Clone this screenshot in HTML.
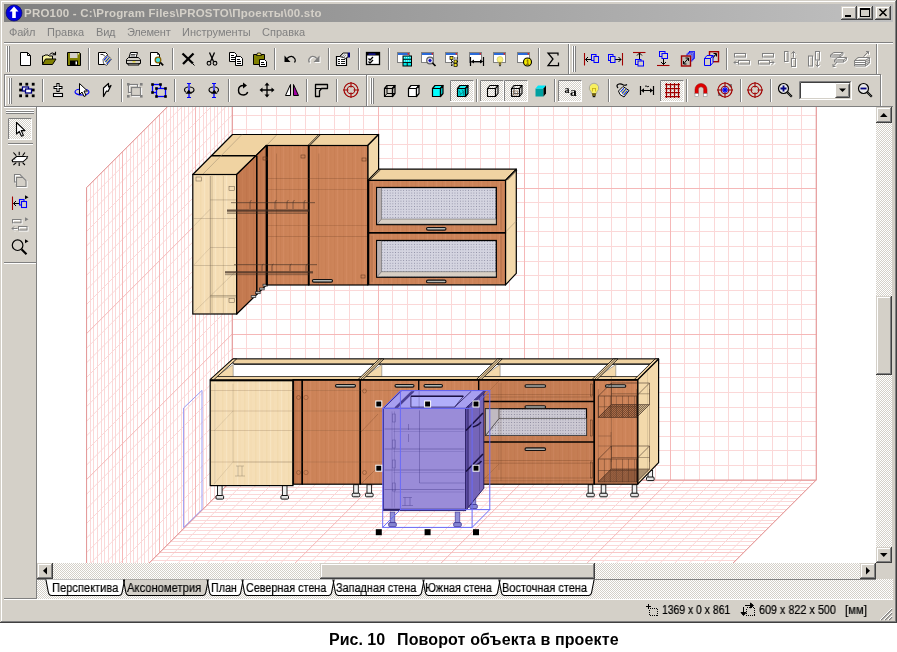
<!DOCTYPE html>
<html><head><meta charset="utf-8"><title>PRO100</title>
<style>
html,body{margin:0;padding:0;background:#fff;}
body{width:897px;height:652px;position:relative;overflow:hidden;font-family:"Liberation Sans",sans-serif;font-size:11px;color:#000;}
.a{position:absolute;}
#win{position:absolute;left:0;top:0;width:897px;height:623px;background:#d4d0c8;}
.t{position:absolute;white-space:nowrap;line-height:13px;font-size:11px;will-change:transform;}
.dith{background-image:conic-gradient(#fff 25%,#d4d0c8 0 50%,#fff 0 75%,#d4d0c8 0);background-size:2px 2px;}
.btn{position:absolute;background:#d4d0c8;box-shadow:inset -1px -1px 0 #404040,inset 1px 1px 0 #d4d0c8,inset -2px -2px 0 #808080,inset 2px 2px 0 #fff;}
.sunk{position:absolute;box-shadow:inset 1px 1px 0 #808080,inset -1px -1px 0 #fff;}
.vs{position:absolute;width:1px;background:#808080;box-shadow:1px 0 0 #fff;}
.hs{position:absolute;height:1px;background:#808080;box-shadow:0 1px 0 #fff;}
.tb{font-size:12px;z-index:5;-webkit-text-stroke:0.2px #000;transform-origin:0 0}
.grip{position:absolute;width:1px;background:#fff;box-shadow:1px 0 0 #d4d0c8,2px 0 0 #808080;}
</style></head><body>
<div id="win">
<!-- window frame -->
<div class="a" style="left:0;top:0;width:897px;height:623px;box-shadow:inset -1px -1px 0 #404040,inset 1px 1px 0 #d4d0c8,inset -2px -2px 0 #808080,inset 2px 2px 0 #fff;"></div>
<!-- title bar -->
<div class="a" style="left:4px;top:4px;width:889px;height:18px;background:linear-gradient(90deg,#808080,#c0c0c0);"></div>
<div class="t" id="title" style="left:24px;top:6.6px;color:#d4d0c8;font-weight:bold;font-size:11.5px;letter-spacing:0.22px;">PRO100 - C:\Program Files\PROSTO\Проекты\00.sto</div>
<!-- caption buttons -->
<div class="btn" style="left:841px;top:6px;width:16px;height:14px;"></div>
<div class="btn" style="left:857px;top:6px;width:16px;height:14px;"></div>
<div class="btn" style="left:875px;top:6px;width:16px;height:14px;"></div>
<!-- menu -->
<div class="t m" style="left:9px;top:26px;color:#808080;letter-spacing:-0.2px">Файл</div>
<div class="t m" style="left:47px;top:26px;color:#808080;">Правка</div>
<div class="t m" style="left:96px;top:26px;color:#808080;letter-spacing:-0.2px">Вид</div>
<div class="t m" style="left:127px;top:26px;color:#808080;letter-spacing:-0.2px">Элемент</div>
<div class="t m" style="left:182px;top:26px;color:#808080;">Инструменты</div>
<div class="t m" style="left:262px;top:26px;color:#808080;">Справка</div>
<!-- left toolbar -->
<div class="a" style="left:36px;top:107px;width:1px;height:493px;background:#808080;"></div>
<!-- scrollbars -->
<div class="a dith" style="left:876px;top:107px;width:16px;height:456px;"></div>
<div class="btn" style="left:876px;top:107px;width:16px;height:16px;"></div>
<div class="btn" style="left:876px;top:547px;width:16px;height:16px;"></div>
<div class="btn" style="left:876px;top:296px;width:16px;height:79px;"></div>
<div class="a dith" style="left:37px;top:563px;width:839px;height:16px;"></div>
<div class="btn" style="left:37px;top:563px;width:16px;height:16px;"></div>
<div class="btn" style="left:860px;top:563px;width:16px;height:16px;"></div>
<div class="btn" style="left:320px;top:563px;width:275px;height:16px;"></div>
<div class="a" style="left:876px;top:563px;width:16px;height:16px;background:#d4d0c8;"></div>
<!-- tab strip -->
<div class="a dith" style="left:37px;top:579px;width:856px;height:21px;"></div>
<div class="a" style="left:37px;top:579px;width:839px;height:1px;background:#808080;"></div>
<div class="a" style="left:4px;top:598px;width:33px;height:1px;background:#808080;"></div>
<div class="a" style="left:4px;top:599px;width:889px;height:1px;background:#fff;"></div>
<!-- tab labels -->
<div class="t tb" style="left:51.7px;top:582px;transform:scaleX(0.925)">Перспектива</div>
<div class="t tb" style="left:127px;top:582px;transform:scaleX(0.934)">Аксонометрия</div>
<div class="t tb" style="left:210.6px;top:582px;transform:scaleX(0.893)">План</div>
<div class="t tb" style="left:245.7px;top:582px;transform:scaleX(0.898)">Северная стена</div>
<div class="t tb" style="left:336px;top:582px;transform:scaleX(0.906)">Западная стена</div>
<div class="t tb" style="left:425.4px;top:582px;transform:scaleX(0.895)">Южная стена</div>
<div class="t tb" style="left:501.6px;top:582px;transform:scaleX(0.912)">Восточная стена</div>
<!-- status bar -->
<div class="t tb" style="left:661.5px;top:603.5px;transform:scaleX(0.866)">1369 x 0 x 861</div>
<div class="t tb" style="left:759px;top:603.5px;transform:scaleX(0.9)">609 x 822 x 500</div>
<div class="t tb" style="left:845px;top:603.5px;transform:scaleX(0.95)">[мм]</div>
<svg id="scene" width="839" height="456" viewBox="37 107 839 456" style="position:absolute;left:37px;top:107px;background:#fff">
<path d="M246.5 480V42M261.5 480V42M276.5 480V42M290.5 480V42M305.5 480V42M319.5 480V42M334.5 480V42M349.5 480V42M363.5 480V42M392.5 480V42M407.5 480V42M422.5 480V42M436.5 480V42M451.5 480V42M465.5 480V42M480.5 480V42M495.5 480V42M509.5 480V42M538.5 480V42M553.5 480V42M568.5 480V42M582.5 480V42M597.5 480V42M611.5 480V42M626.5 480V42M641.5 480V42M655.5 480V42M684.5 480V42M699.5 480V42M714.5 480V42M728.5 480V42M743.5 480V42M757.5 480V42M772.5 480V42M787.5 480V42M801.5 480V42M232.2 465.5H816.2M232.2 450.5H816.2M232.2 436.5H816.2M232.2 421.5H816.2M232.2 407.5H816.2M232.2 392.5H816.2M232.2 377.5H816.2M232.2 363.5H816.2M232.2 348.5H816.2M232.2 319.5H816.2M232.2 304.5H816.2M232.2 290.5H816.2M232.2 275.5H816.2M232.2 261.5H816.2M232.2 246.5H816.2M232.2 231.5H816.2M232.2 217.5H816.2M232.2 202.5H816.2M232.2 173.5H816.2M232.2 158.5H816.2M232.2 144.5H816.2M232.2 129.5H816.2M232.2 115.5H816.2M232.2 100.5H816.2M232.2 85.5H816.2M232.2 71.5H816.2M232.2 56.5H816.2M228.5 483.6V45.6M224.5 487.3V49.3M221.5 490.9V52.9M217.5 494.6V56.6M214.5 498.2V60.2M210.5 501.8V63.8M206.5 505.5V67.5M203.5 509.1V71.1M199.5 512.8V74.8M192.5 520V82M188.5 523.7V85.7M184.5 527.3V89.3M181.5 531V93M177.5 534.6V96.6M173.5 538.2V100.2M170.5 541.9V103.9M166.5 545.5V107.5M163.5 549.2V111.2M155.5 556.4V118.4M152.5 560.1V122.1M148.5 563.7V125.7M144.5 567.4V129.4M141.5 571V133M137.5 574.6V136.6M133.5 578.3V140.3M130.5 581.9V143.9M126.5 585.6V147.6M119.5 592.8V154.8M115.5 596.5V158.5M112.5 600.1V162.1M108.5 603.8V165.8M104.5 607.4V169.4M101.5 611V173M97.5 614.7V176.7M93.5 618.3V180.3M90.5 622V184M232.2 465.4L86.6 611M232.2 450.8L86.6 596.4M232.2 436.2L86.6 581.8M232.2 421.6L86.6 567.2M232.2 407L86.6 552.6M232.2 392.4L86.6 538M232.2 377.8L86.6 523.4M232.2 363.2L86.6 508.8M232.2 348.6L86.6 494.2M232.2 319.4L86.6 465M232.2 304.8L86.6 450.4M232.2 290.2L86.6 435.8M232.2 275.6L86.6 421.2M232.2 261L86.6 406.6M232.2 246.4L86.6 392M232.2 231.8L86.6 377.4M232.2 217.2L86.6 362.8M232.2 202.6L86.6 348.2M232.2 173.4L86.6 319M232.2 158.8L86.6 304.4M232.2 144.2L86.6 289.8M232.2 129.6L86.6 275.2M232.2 115L86.6 260.6M232.2 100.4L86.6 246M232.2 85.8L86.6 231.4M232.2 71.2L86.6 216.8M232.2 56.6L86.6 202.2M228.6 483.5H812.6M224.9 487.5H808.9M221.3 490.5H805.3M217.6 494.5H801.6M214 498.5H798M210.4 501.5H794.4M206.7 505.5H790.7M203.1 509.5H787.1M199.4 512.5H783.4M192.2 520.5H776.2M188.5 523.5H772.5M184.9 527.5H768.9M181.2 530.5H765.2M177.6 534.5H761.6M174 538.5H758M170.3 541.5H754.3M166.7 545.5H750.7M163 549.5H747M155.8 556.5H739.8M152.1 560.5H736.1M148.5 563.5H732.5M144.8 567.5H728.8M141.2 571.5H725.2M137.6 574.5H721.6M133.9 578.5H717.9M130.3 581.5H714.3M126.6 585.5H710.6M119.4 592.5H703.4M115.7 596.5H699.7M112.1 600.5H696.1M108.4 603.5H692.4M104.8 607.5H688.8M101.2 611.5H685.2M97.5 614.5H681.5M93.9 618.5H677.9M90.2 621.5H674.2M246.8 480L101.2 625.6M261.4 480L115.8 625.6M276 480L130.4 625.6M290.6 480L145 625.6M305.2 480L159.6 625.6M319.8 480L174.2 625.6M334.4 480L188.8 625.6M349 480L203.4 625.6M363.6 480L218 625.6M392.8 480L247.2 625.6M407.4 480L261.8 625.6M422 480L276.4 625.6M436.6 480L291 625.6M451.2 480L305.6 625.6M465.8 480L320.2 625.6M480.4 480L334.8 625.6M495 480L349.4 625.6M509.6 480L364 625.6M538.8 480L393.2 625.6M553.4 480L407.8 625.6M568 480L422.4 625.6M582.6 480L437 625.6M597.2 480L451.6 625.6M611.8 480L466.2 625.6M626.4 480L480.8 625.6M641 480L495.4 625.6M655.6 480L510 625.6M684.8 480L539.2 625.6M699.4 480L553.8 625.6M714 480L568.4 625.6M728.6 480L583 625.6M743.2 480L597.6 625.6M757.8 480L612.2 625.6M772.4 480L626.8 625.6M787 480L641.4 625.6M801.6 480L656 625.6" fill="none" stroke="#fbd8d8" stroke-width="1"/>
<path d="M195.8 516.5H779.8M159.4 552.5H743.4M123 589.5H707M86.6 625.5H670.6" fill="none" stroke="#f8c8c8" stroke-width="1"/>
<path d="M232.5 480V42M378.5 480V42M524.5 480V42M670.5 480V42M816.5 480V42M232.2 480.5H816.2M232.2 334.5H816.2M232.2 188.5H816.2M232.2 42.5H816.2M195.5 516.4V78.4M159.5 552.8V114.8M122.5 589.2V151.2M86.5 625.6V187.6M232.2 480L86.6 625.6M232.2 334L86.6 479.6M232.2 188L86.6 333.6M232.2 42L86.6 187.6M232.2 480L86.6 625.6M378.2 480L232.6 625.6M524.2 480L378.6 625.6M670.2 480L524.6 625.6M816.2 480L670.6 625.6" fill="none" stroke="#f5b8b8" stroke-width="1"/>
<path d="M86.6 187.6L232.2 42L816.2 42L816.2 480L670.6 625.6L86.6 625.6Z" fill="none" stroke="#e39a9a" stroke-width="1"/>
<path d="M232.2 480L232.2 42M232.2 480L816.2 480M232.2 480L86.6 625.6" fill="none" stroke="#e39a9a" stroke-width="1"/>
<defs>
<linearGradient id="gB" x1="0" x2="1" y1="0" y2="0"><stop offset="0" stop-color="#c9774a"/><stop offset="0.5" stop-color="#d08352"/><stop offset="1" stop-color="#c87a4b"/></linearGradient>
<pattern id="grain" width="9" height="40" patternUnits="userSpaceOnUse"><rect width="9" height="40" fill="#cd8459"/><rect x="1" width="1.2" height="40" fill="#c2784e" opacity=".4"/><rect x="4" width="1" height="40" fill="#d79168" opacity=".45"/><rect x="6.5" width="0.8" height="40" fill="#c0764c" opacity=".3"/></pattern>
<pattern id="grainD" width="7" height="40" patternUnits="userSpaceOnUse"><rect width="7" height="40" fill="#c47a50"/><rect x="1" width="1.2" height="40" fill="#b96e45" opacity=".4"/><rect x="4" width="1" height="40" fill="#cc845a" opacity=".4"/></pattern>
<pattern id="birch" width="11" height="40" patternUnits="userSpaceOnUse"><rect width="11" height="40" fill="#f5deb6"/><rect x="2" width="1.5" height="40" fill="#f0d5a6" opacity=".5"/><rect x="6" width="1" height="40" fill="#f9e8c8" opacity=".6"/><rect x="8.5" width="1" height="40" fill="#eed3a3" opacity=".35"/></pattern>
<pattern id="dots" width="2.7" height="2.7" patternUnits="userSpaceOnUse"><rect width="2.7" height="2.7" fill="#d4d4e0"/><rect x="0.9" y="0.9" width="0.9" height="0.9" fill="#8c8ca2"/></pattern>
</defs>
<polygon points="192.8,174.5 232.5,134.5 378.6,134.5 367.8,145.5 266.4,145.5 236.7,174.5" fill="#f0d3a2" stroke="#000" stroke-width="1.2" stroke-linejoin="round" />
<line x1="211.3" y1="155.8" x2="256.3" y2="155.8" stroke="#000" stroke-width="1.6" />
<line x1="308" y1="145.5" x2="318.8" y2="134.5" stroke="#000" stroke-width="0.8" />
<line x1="309.8" y1="145.5" x2="320.6" y2="134.5" stroke="#000" stroke-width="0.8" />
<line x1="266.4" y1="145.5" x2="276.5" y2="135.1" stroke="#8a7a60" stroke-width="0.5" />
<line x1="202.5" y1="174.5" x2="242" y2="134.5" stroke="#9a8a70" stroke-width="0.5" />
<polygon points="367.8,145.5 378.6,134.5 378.6,172 367.8,182" fill="#f3d9ab" stroke="#000" stroke-width="1.2" stroke-linejoin="round" />
<rect x="192.8" y="174.5" width="43.9" height="139.5" fill="url(#birch)" stroke="#000" stroke-width="1.2" />
<line x1="210.3" y1="176" x2="210.3" y2="313" stroke="#6a5a48" stroke-width="0.7" opacity=".7"/>
<line x1="212.1" y1="176" x2="212.1" y2="313" stroke="#6a5a48" stroke-width="0.5" opacity=".45"/>
<line x1="223.6" y1="176" x2="223.6" y2="313" stroke="#6a5a48" stroke-width="0.5" opacity=".35"/>
<line x1="210.3" y1="199.9" x2="236" y2="199.9" stroke="#6a5a48" stroke-width="0.5" opacity=".6"/>
<line x1="210.3" y1="247.7" x2="236" y2="247.7" stroke="#6a5a48" stroke-width="0.5" opacity=".6"/>
<line x1="210.3" y1="295.3" x2="236" y2="295.3" stroke="#6a5a48" stroke-width="0.5" opacity=".6"/>
<line x1="193.5" y1="218.7" x2="236" y2="218.7" stroke="#6a5a48" stroke-width="0.5" opacity=".6"/>
<line x1="193.5" y1="265.4" x2="236" y2="265.4" stroke="#6a5a48" stroke-width="0.5" opacity=".6"/>
<rect x="210.3" y="295.3" width="25.7" height="2.4" fill="#6a5a48" opacity=".25"/>
<line x1="193.5" y1="226.3" x2="210.3" y2="209.1" stroke="#6a5a48" stroke-width="0.4" opacity=".5"/>
<line x1="193.5" y1="312.5" x2="236" y2="271" stroke="#6a5a48" stroke-width="0.4" opacity=".5"/>
<line x1="193.5" y1="265.4" x2="210.3" y2="247.7" stroke="#6a5a48" stroke-width="0.4" opacity=".4"/>
<rect x="196" y="177" width="5.5" height="4" fill="none" stroke="#6a5a48" stroke-width="0.5" />
<rect x="229" y="186.5" width="5.5" height="4" fill="none" stroke="#6a5a48" stroke-width="0.5" />
<rect x="229" y="298.7" width="5.5" height="4" fill="none" stroke="#6a5a48" stroke-width="0.5" />
<polygon points="236.7,174.5 266.4,145.5 266.4,285 236.7,314" fill="url(#grainD)" stroke="#000" stroke-width="1.2" stroke-linejoin="round" />
<line x1="256.8" y1="155.8" x2="256.8" y2="294.5" stroke="#000" stroke-width="1.5" />
<rect x="251.2" y="295.7" width="4.6" height="1.9" fill="#d8d8d8" stroke="#222" stroke-width=".7"/>
<rect x="255.6" y="291.8" width="4.6" height="1.9" fill="#d8d8d8" stroke="#222" stroke-width=".7"/>
<rect x="259.6" y="288" width="4.6" height="1.9" fill="#d8d8d8" stroke="#222" stroke-width=".7"/>
<rect x="263" y="284.2" width="4.6" height="1.9" fill="#d8d8d8" stroke="#222" stroke-width=".7"/>
<rect x="266.4" y="145.5" width="42.3" height="139.5" fill="url(#grain)" stroke="#000" stroke-width="1.2" />
<rect x="308.7" y="145.5" width="59.1" height="139.5" fill="url(#grain)" stroke="#000" stroke-width="1.2" />
<line x1="267.4" y1="145.5" x2="267.4" y2="285" stroke="#000" stroke-width="1.1" />
<line x1="308.7" y1="145.5" x2="308.7" y2="285" stroke="#000" stroke-width="1.8" />
<line x1="268" y1="178.5" x2="367" y2="178.5" stroke="#5a3018" stroke-width="0.5" opacity=".45"/>
<line x1="268" y1="189.7" x2="367" y2="189.7" stroke="#5a3018" stroke-width="0.5" opacity=".45"/>
<line x1="268" y1="225.3" x2="367" y2="225.3" stroke="#5a3018" stroke-width="0.5" opacity=".45"/>
<line x1="268" y1="236.5" x2="367" y2="236.5" stroke="#5a3018" stroke-width="0.5" opacity=".45"/>
<line x1="318.8" y1="153.5" x2="318.8" y2="284" stroke="#5a3018" stroke-width="0.5" opacity=".4"/>
<line x1="276.5" y1="153.5" x2="276.5" y2="284" stroke="#5a3018" stroke-width="0.5" opacity=".4"/>
<rect x="227" y="209.5" width="83" height="2.2" fill="#3a2a20" opacity=".75"/>
<rect x="231" y="202" width="84" height="1.2" fill="#3a2a20" opacity=".5"/>
<rect x="227" y="212.5" width="80" height="1.4" fill="#3a2a20" opacity=".45"/>
<rect x="225" y="271.2" width="88" height="2.2" fill="#3a2a20" opacity=".7"/>
<rect x="234" y="264" width="83" height="1.2" fill="#3a2a20" opacity=".5"/><rect x="225" y="274" width="85" height="1.2" fill="#3a2a20" opacity=".4"/>
<path d="M275 209v-6q0-2 1.5-3" fill="none" stroke="#3a2a20" stroke-width=".8" opacity=".7"/>
<path d="M293 209v-6q0-2 1.5-3" fill="none" stroke="#3a2a20" stroke-width=".8" opacity=".7"/>
<path d="M250 209v-6q0-2 1.5-3" fill="none" stroke="#3a2a20" stroke-width=".8" opacity=".7"/>
<path d="M287 209v-6q0-2 1.5-3" fill="none" stroke="#3a2a20" stroke-width=".8" opacity=".7"/>
<path d="M304 209v-6q0-2 1.5-3" fill="none" stroke="#3a2a20" stroke-width=".8" opacity=".7"/>
<path d="M262 271v-5q0-1.500 1.500-2" fill="none" stroke="#3a2a20" stroke-width=".8" opacity=".7"/>
<path d="M272 271v-5q0-1.500 1.500-2" fill="none" stroke="#3a2a20" stroke-width=".8" opacity=".7"/>
<path d="M290 271v-5q0-1.500 1.500-2" fill="none" stroke="#3a2a20" stroke-width=".8" opacity=".7"/>
<path d="M306 271v-5q0-1.500 1.500-2" fill="none" stroke="#3a2a20" stroke-width=".8" opacity=".7"/>
<rect x="263" y="157" width="4" height="3" fill="none" stroke="#5a3018" stroke-width="0.5" />
<rect x="301" y="155" width="4" height="3" fill="none" stroke="#5a3018" stroke-width="0.5" />
<rect x="362" y="158" width="4" height="3" fill="none" stroke="#5a3018" stroke-width="0.5" />
<rect x="361" y="275" width="4" height="3" fill="none" stroke="#5a3018" stroke-width="0.5" />
<rect x="312.4" y="279.5" width="20.1" height="2.6" rx="1.3" fill="#b4b8b4" stroke="#111" stroke-width="1.1"/>
<polygon points="367.9,180.4 378.9,169.2 516.3,169.2 505.5,180.4" fill="#f0d3a2" stroke="#000" stroke-width="1.2" stroke-linejoin="round" />
<polygon points="505.5,180.4 516.3,169.2 516.3,273.3 505.5,284.9" fill="#f3d9ab" stroke="#000" stroke-width="1.2" stroke-linejoin="round" />
<line x1="507.2" y1="180.2" x2="517" y2="170.2" stroke="#000" stroke-width="0.7" />
<line x1="505.5" y1="232" x2="516.3" y2="221" stroke="#9a8a70" stroke-width="0.5" />
<line x1="370" y1="179.8" x2="380.5" y2="169.8" stroke="#000" stroke-width="0.7" />
<rect x="367.9" y="180.4" width="137.6" height="52.4" fill="url(#grain)" stroke="#000" stroke-width="1.2" />
<rect x="376.7" y="187.5" width="119.6" height="37.1" fill="url(#dots)" stroke="#000" stroke-width="1.3" />
<rect x="377.3" y="188.1" width="4.2" height="35.9" fill="#b8b0b0" stroke="none" stroke-width="0" />
<polygon points="377.3,224 381.5,219.1 496,219.1 496,224" fill="#d8cfc4" stroke="#555" stroke-width="0.5" stroke-linejoin="round" />
<line x1="381.5" y1="187.5" x2="381.5" y2="219.1" stroke="#555" stroke-width="0.5" />
<line x1="372" y1="183.4" x2="372" y2="229.8" stroke="#5a3018" stroke-width="0.5" opacity=".5"/>
<line x1="501" y1="183.4" x2="501" y2="229.8" stroke="#5a3018" stroke-width="0.5" opacity=".5"/>
<rect x="426.5" y="227.5" width="19.5" height="2.6" rx="1.3" fill="#b4b8b4" stroke="#111" stroke-width="1.1"/>
<rect x="367.9" y="232.8" width="137.6" height="52.1" fill="url(#grain)" stroke="#000" stroke-width="1.2" />
<rect x="376.7" y="240.5" width="119.6" height="36.7" fill="url(#dots)" stroke="#000" stroke-width="1.3" />
<rect x="377.3" y="241.1" width="4.2" height="35.5" fill="#b8b0b0" stroke="none" stroke-width="0" />
<polygon points="377.3,276.6 381.5,271.7 496,271.7 496,276.6" fill="#d8cfc4" stroke="#555" stroke-width="0.5" stroke-linejoin="round" />
<line x1="381.5" y1="240.5" x2="381.5" y2="271.7" stroke="#555" stroke-width="0.5" />
<line x1="372" y1="235.8" x2="372" y2="281.9" stroke="#5a3018" stroke-width="0.5" opacity=".5"/>
<line x1="501" y1="235.8" x2="501" y2="281.9" stroke="#5a3018" stroke-width="0.5" opacity=".5"/>
<rect x="426.5" y="280.1" width="19.5" height="2.6" rx="1.3" fill="#b4b8b4" stroke="#111" stroke-width="1.1"/>
<line x1="367.9" y1="232.8" x2="505.5" y2="232.8" stroke="#000" stroke-width="1.6" />
<line x1="368.5" y1="180.4" x2="368.5" y2="284.9" stroke="#000" stroke-width="1.6" />
<rect x="217.5" y="485.5" width="4.6" height="10.5" fill="#f0f0f0" stroke="#111" stroke-width=".9"/>
<rect x="216" y="495.5" width="7.6" height="3.6" rx="1" fill="#e4e4e4" stroke="#111" stroke-width="1"/>
<rect x="282.4" y="485.5" width="4.6" height="10.5" fill="#f0f0f0" stroke="#111" stroke-width=".9"/>
<rect x="280.9" y="495.5" width="7.6" height="3.6" rx="1" fill="#e4e4e4" stroke="#111" stroke-width="1"/>
<rect x="353.7" y="484.7" width="4.6" height="9" fill="#f0f0f0" stroke="#111" stroke-width=".9"/>
<rect x="352.2" y="493.2" width="7.6" height="3.6" rx="1" fill="#e4e4e4" stroke="#111" stroke-width="1"/>
<rect x="367" y="484.7" width="4.6" height="9" fill="#f0f0f0" stroke="#111" stroke-width=".9"/>
<rect x="365.5" y="493.2" width="7.6" height="3.6" rx="1" fill="#e4e4e4" stroke="#111" stroke-width="1"/>
<rect x="588.2" y="484.7" width="4.6" height="9" fill="#f0f0f0" stroke="#111" stroke-width=".9"/>
<rect x="586.7" y="493.2" width="7.6" height="3.6" rx="1" fill="#e4e4e4" stroke="#111" stroke-width="1"/>
<rect x="601.2" y="484.7" width="4.6" height="9" fill="#f0f0f0" stroke="#111" stroke-width=".9"/>
<rect x="599.7" y="493.2" width="7.6" height="3.6" rx="1" fill="#e4e4e4" stroke="#111" stroke-width="1"/>
<rect x="632.2" y="484.7" width="4.6" height="9" fill="#f0f0f0" stroke="#111" stroke-width=".9"/>
<rect x="630.7" y="493.2" width="7.6" height="3.6" rx="1" fill="#e4e4e4" stroke="#111" stroke-width="1"/>
<rect x="648" y="470.5" width="4.6" height="7" fill="#f0f0f0" stroke="#111" stroke-width=".9"/>
<rect x="646.5" y="477" width="7.6" height="3.6" rx="1" fill="#e4e4e4" stroke="#111" stroke-width="1"/>
<polygon points="210.2,379.7 233,359 658.6,359 637.7,379.7" fill="#fff" stroke="#000" stroke-width="1.2" stroke-linejoin="round" />
<polygon points="233,359 658.6,359 658.6,363.8 233,363.8" fill="#f0d3a2" stroke="#000" stroke-width="0.8" stroke-linejoin="round" />
<line x1="234" y1="364.5" x2="657.6" y2="364.5" stroke="#333" stroke-width="1" />
<polygon points="215.7,376.7 233.2,364.5 233.2,376.7" fill="#f3d9ab" stroke="#666" stroke-width="0.5" stroke-linejoin="round" />
<polygon points="364.3,376.7 381.8,364.5 381.8,376.7" fill="#f3d9ab" stroke="#666" stroke-width="0.5" stroke-linejoin="round" />
<polygon points="482.6,376.7 500.1,364.5 500.1,376.7" fill="#f3d9ab" stroke="#666" stroke-width="0.5" stroke-linejoin="round" />
<polygon points="598.3,376.7 615.8,364.5 615.8,376.7" fill="#f3d9ab" stroke="#666" stroke-width="0.5" stroke-linejoin="round" />
<polygon points="213.2,376.5 640.7,376.5 637.7,379.7 210.2,379.7" fill="#f0d3a2" stroke="#000" stroke-width="0.7" stroke-linejoin="round" />
<polygon points="210.2,379.7 233,359 236.6,359 213.8,379.7" fill="#f0d3a2" stroke="#000" stroke-width="0.8" stroke-linejoin="round" />
<polygon points="357.9,379.7 379.1,359 383.9,359 362.7,379.7" fill="#f0d3a2" stroke="#000" stroke-width="0.8" stroke-linejoin="round" />
<line x1="360.3" y1="379.7" x2="381.5" y2="359" stroke="#000" stroke-width="0.6" />
<polygon points="476.2,379.7 497.4,359 502.2,359 481,379.7" fill="#f0d3a2" stroke="#000" stroke-width="0.8" stroke-linejoin="round" />
<line x1="478.6" y1="379.7" x2="499.8" y2="359" stroke="#000" stroke-width="0.6" />
<polygon points="591.9,379.7 613.1,359 617.9,359 596.7,379.7" fill="#f0d3a2" stroke="#000" stroke-width="0.8" stroke-linejoin="round" />
<line x1="594.3" y1="379.7" x2="615.5" y2="359" stroke="#000" stroke-width="0.6" />
<polygon points="634.1,379.7 655,359 658.6,359 637.7,379.7" fill="#f0d3a2" stroke="#000" stroke-width="0.8" stroke-linejoin="round" />
<polygon points="637.7,379.7 658.6,359 658.6,462.7 637.7,484.2" fill="#f3d9ab" stroke="#000" stroke-width="1.2" stroke-linejoin="round" />
<line x1="647.7" y1="370.7" x2="647.7" y2="474" stroke="#9a8a70" stroke-width="0.5" opacity=".6"/>
<rect x="210.2" y="380.5" width="82.8" height="105.1" fill="url(#birch)" stroke="#000" stroke-width="1.2" />
<rect x="293" y="379.7" width="9.3" height="104.5" fill="url(#grainD)" stroke="#000" stroke-width="1.2" />
<rect x="302.3" y="379.7" width="58" height="104.5" fill="url(#grain)" stroke="#000" stroke-width="1.2" />
<rect x="360.3" y="379.7" width="58.5" height="104.5" fill="url(#grain)" stroke="#000" stroke-width="1.2" />
<rect x="418.8" y="379.7" width="59.8" height="104.5" fill="url(#grain)" stroke="#000" stroke-width="1.2" />
<rect x="478.6" y="379.7" width="115.7" height="104.5" fill="url(#grain)" stroke="#000" stroke-width="1.2" />
<rect x="594.3" y="379.7" width="43.4" height="104.5" fill="url(#grain)" stroke="#000" stroke-width="1.2" />
<line x1="302.3" y1="379.7" x2="302.3" y2="484.2" stroke="#000" stroke-width="1.3" />
<line x1="360.3" y1="379.7" x2="360.3" y2="484.2" stroke="#000" stroke-width="1.3" />
<line x1="478.6" y1="379.7" x2="478.6" y2="484.2" stroke="#000" stroke-width="1.3" />
<line x1="594.3" y1="379.7" x2="594.3" y2="484.2" stroke="#000" stroke-width="1.3" />
<line x1="293.6" y1="379.7" x2="293.6" y2="484.2" stroke="#000" stroke-width="1" />
<line x1="293" y1="379.9" x2="637.7" y2="379.9" stroke="#000" stroke-width="1.5" />
<line x1="210.2" y1="380.5" x2="293" y2="380.5" stroke="#000" stroke-width="1.5" />
<line x1="478.6" y1="401.4" x2="594.3" y2="401.4" stroke="#000" stroke-width="1.5" />
<line x1="478.6" y1="441.9" x2="594.3" y2="441.9" stroke="#000" stroke-width="1.5" />
<rect x="485.5" y="408.7" width="101" height="26.7" fill="url(#dots)" stroke="#000" stroke-width="1.2" />
<polygon points="485.5,435.4 499,418.5 586.5,418.5 586.5,435.4" fill="url(#dots)" stroke="#333" stroke-width="0.6" stroke-linejoin="round" />
<polygon points="485.5,408.7 499,408.7 499,418.5 485.5,435.4" fill="#c8c4cc" stroke="#333" stroke-width="0.6" stroke-linejoin="round" />
<rect x="525" y="384.7" width="20.6" height="2.6" rx="1.3" fill="#b4b8b4" stroke="#111" stroke-width="1.1"/>
<rect x="525" y="405.7" width="20.6" height="2.6" rx="1.3" fill="#b4b8b4" stroke="#111" stroke-width="1.1"/>
<rect x="525" y="447.9" width="20.6" height="2.6" rx="1.3" fill="#b4b8b4" stroke="#111" stroke-width="1.1"/>
<rect x="335.5" y="384.5" width="20" height="2.6" rx="1.3" fill="#b4b8b4" stroke="#111" stroke-width="1.1"/>
<rect x="395" y="384.5" width="19" height="2.6" rx="1.3" fill="#b4b8b4" stroke="#111" stroke-width="1.1"/>
<rect x="424" y="384.5" width="18.5" height="2.6" rx="1.3" fill="#b4b8b4" stroke="#111" stroke-width="1.1"/>
<rect x="605.5" y="384.7" width="20.3" height="2.6" rx="1.3" fill="#b4b8b4" stroke="#111" stroke-width="1.1"/>
<line x1="211" y1="390.5" x2="477" y2="390.5" stroke="#6a4a30" stroke-width="0.5" opacity=".4"/>
<line x1="211" y1="411" x2="477" y2="411" stroke="#6a4a30" stroke-width="0.5" opacity=".4"/>
<line x1="211" y1="430.5" x2="477" y2="430.5" stroke="#6a4a30" stroke-width="0.5" opacity=".4"/>
<line x1="211" y1="462" x2="477" y2="462" stroke="#6a4a30" stroke-width="0.5" opacity=".4"/>
<line x1="215" y1="383.7" x2="215" y2="484" stroke="#8a7a60" stroke-width="0.5" opacity=".5"/>
<line x1="233" y1="383.7" x2="233" y2="462" stroke="#8a7a60" stroke-width="0.5" opacity=".5"/>
<line x1="214" y1="484" x2="233" y2="462" stroke="#8a7a60" stroke-width="0.4" opacity=".5"/>
<line x1="214" y1="431" x2="233" y2="411" stroke="#8a7a60" stroke-width="0.4" opacity=".5"/>
<line x1="233" y1="462" x2="292" y2="462" stroke="#8a7a60" stroke-width="0.5" opacity=".5"/>
<line x1="361" y1="432" x2="378" y2="414" stroke="#5a3018" stroke-width="0.5" opacity=".5"/>
<line x1="361" y1="484" x2="381" y2="464" stroke="#5a3018" stroke-width="0.5" opacity=".5"/>
<line x1="480" y1="394.4" x2="593" y2="394.4" stroke="#4a2810" stroke-width="0.5" opacity=".45"/>
<line x1="480" y1="397" x2="593" y2="397" stroke="#4a2810" stroke-width="0.5" opacity=".45"/>
<line x1="480" y1="460.5" x2="593" y2="460.5" stroke="#4a2810" stroke-width="0.5" opacity=".45"/>
<line x1="480" y1="463.2" x2="593" y2="463.2" stroke="#4a2810" stroke-width="0.5" opacity=".45"/>
<line x1="480" y1="478" x2="593" y2="478" stroke="#4a2810" stroke-width="0.5" opacity=".45"/>
<line x1="480" y1="480.8" x2="593" y2="480.8" stroke="#4a2810" stroke-width="0.5" opacity=".45"/>
<rect x="479" y="380" width="115" height="104" fill="#5a2a10" opacity=".06"/>
<line x1="501" y1="382.7" x2="501" y2="481" stroke="#4a2810" stroke-width="0.5" opacity=".35"/>
<line x1="480" y1="400" x2="499" y2="381" stroke="#4a2810" stroke-width="0.4" opacity=".4"/>
<line x1="480" y1="441" x2="499" y2="422" stroke="#4a2810" stroke-width="0.4" opacity=".4"/>
<line x1="480" y1="483" x2="499" y2="464" stroke="#4a2810" stroke-width="0.4" opacity=".4"/>
<rect x="590.5" y="384" width="2" height="12" fill="none" stroke="#4a2810" stroke-width="0.4" />
<rect x="590.5" y="420" width="2" height="16" fill="none" stroke="#4a2810" stroke-width="0.4" />
<rect x="590.5" y="462" width="2" height="16" fill="none" stroke="#4a2810" stroke-width="0.4" />
<line x1="499" y1="382.7" x2="499" y2="470" stroke="#5a3018" stroke-width="0.5" opacity=".4"/>
<circle cx="298.5" cy="397.5" r="2" fill="none" stroke="#5a3018" stroke-width=".5" opacity=".7"/>
<circle cx="298.5" cy="472.5" r="2" fill="none" stroke="#5a3018" stroke-width=".5" opacity=".7"/>
<circle cx="364.5" cy="391" r="2" fill="none" stroke="#5a3018" stroke-width=".5" opacity=".7"/>
<circle cx="364.5" cy="472.5" r="2" fill="none" stroke="#5a3018" stroke-width=".5" opacity=".7"/>
<circle cx="306" cy="397.5" r="2.2" fill="none" stroke="#5a3018" stroke-width=".5" opacity=".6"/><circle cx="306" cy="472.5" r="2.2" fill="none" stroke="#5a3018" stroke-width=".5" opacity=".6"/>
<path d="M236 466h8m-6 0v10m4-10v10m-7 0h10" fill="none" stroke="#8a7a60" stroke-width=".6" opacity=".7"/>
<g stroke="#2a1810" stroke-width=".6" fill="none" opacity=".8">
<path d="M598.4 417.5H636.5L649.5 404.5H611.4Z" fill="#3a2010" fill-opacity=".25"/>
<path d="M598.4 396H636.5L649.5 383H611.4Z"/>
<path d="M598.4 417.5l13 -13"/>
<path d="M600.4 417.5l13 -13"/>
<path d="M602.4 417.5l13 -13"/>
<path d="M604.4 417.5l13 -13"/>
<path d="M606.4 417.5l13 -13"/>
<path d="M608.4 417.5l13 -13"/>
<path d="M610.4 417.5l13 -13"/>
<path d="M612.4 417.5l13 -13"/>
<path d="M614.4 417.5l13 -13"/>
<path d="M616.4 417.5l13 -13"/>
<path d="M618.5 417.5l13 -13"/>
<path d="M620.5 417.5l13 -13"/>
<path d="M622.5 417.5l13 -13"/>
<path d="M624.5 417.5l13 -13"/>
<path d="M626.5 417.5l13 -13"/>
<path d="M628.5 417.5l13 -13"/>
<path d="M630.5 417.5l13 -13"/>
<path d="M632.5 417.5l13 -13"/>
<path d="M634.5 417.5l13 -13"/>
<path d="M636.5 417.5l13 -13"/>
<path d="M598.4 396V417.5" opacity=".6"/>
<path d="M604.4 396V417.5" opacity=".6"/>
<path d="M610.4 396V417.5" opacity=".6"/>
<path d="M616.4 396V417.5" opacity=".6"/>
<path d="M622.5 396V417.5" opacity=".6"/>
<path d="M628.5 396V417.5" opacity=".6"/>
<path d="M634.5 396V417.5" opacity=".6"/>
<path d="M649.5 383V404.5M611.4 383V404.5M598.4 396V417.5M636.5 396V417.5"/>
<path d="M598.4 406.8H636.5M611.4 393.8H649.5" opacity=".7"/>
</g>
<g stroke="#2a1810" stroke-width=".6" fill="none" opacity=".8">
<path d="M598.4 482H636.5L649.5 469H611.4Z" fill="#3a2010" fill-opacity=".25"/>
<path d="M598.4 459H636.5L649.5 446H611.4Z"/>
<path d="M598.4 482l13 -13"/>
<path d="M600.4 482l13 -13"/>
<path d="M602.4 482l13 -13"/>
<path d="M604.4 482l13 -13"/>
<path d="M606.4 482l13 -13"/>
<path d="M608.4 482l13 -13"/>
<path d="M610.4 482l13 -13"/>
<path d="M612.4 482l13 -13"/>
<path d="M614.4 482l13 -13"/>
<path d="M616.4 482l13 -13"/>
<path d="M618.5 482l13 -13"/>
<path d="M620.5 482l13 -13"/>
<path d="M622.5 482l13 -13"/>
<path d="M624.5 482l13 -13"/>
<path d="M626.5 482l13 -13"/>
<path d="M628.5 482l13 -13"/>
<path d="M630.5 482l13 -13"/>
<path d="M632.5 482l13 -13"/>
<path d="M634.5 482l13 -13"/>
<path d="M636.5 482l13 -13"/>
<path d="M598.4 459V482" opacity=".6"/>
<path d="M604.4 459V482" opacity=".6"/>
<path d="M610.4 459V482" opacity=".6"/>
<path d="M616.4 459V482" opacity=".6"/>
<path d="M622.5 459V482" opacity=".6"/>
<path d="M628.5 459V482" opacity=".6"/>
<path d="M634.5 459V482" opacity=".6"/>
<path d="M649.5 446V469M611.4 446V469M598.4 459V482M636.5 459V482"/>
<path d="M598.4 470.5H636.5M611.4 457.5H649.5" opacity=".7"/>
</g>
<path d="M598.4 389v94M611.4 376v86M636.5 389v94M649.5 389v73" stroke="#3a2418" stroke-width=".5" fill="none" opacity=".5"/>
<path d="M598.4 436H611M598.4 446H611M611 432v18" stroke="#3a2418" stroke-width=".5" fill="none" opacity=".5"/>
<path d="M183.6 408L202 390.4V509.5L183.6 527.6Z" fill="none" stroke="#9a9af4" stroke-width="1"/>
<rect x="405.7" y="493.5" width="4.6" height="6" fill="#8f8fd8" stroke="#4a3f9a" stroke-width=".7"/>
<rect x="404.2" y="499" width="7.6" height="4" rx="1" fill="#8585d0" stroke="#3a3090" stroke-width=".8"/>
<rect x="471.2" y="496" width="4.6" height="9" fill="#8f8fd8" stroke="#4a3f9a" stroke-width=".7"/>
<rect x="469.7" y="504.5" width="7.6" height="4" rx="1" fill="#8585d0" stroke="#3a3090" stroke-width=".8"/>
<rect x="390.2" y="512.1" width="4.6" height="11" fill="#8f8fd8" stroke="#4a3f9a" stroke-width=".7"/>
<rect x="388.7" y="522.6" width="7.6" height="4" rx="1" fill="#8585d0" stroke="#3a3090" stroke-width=".8"/>
<rect x="455.2" y="512.1" width="4.6" height="11" fill="#8f8fd8" stroke="#4a3f9a" stroke-width=".7"/>
<rect x="453.7" y="522.6" width="7.6" height="4" rx="1" fill="#8585d0" stroke="#3a3090" stroke-width=".8"/>
<polygon points="465.5,408.4 483.8,390.6 483.8,488.3 465.5,510.6" fill="#7565b8" stroke="#2a2060" stroke-width="1" stroke-linejoin="round" />
<polygon points="383.5,408.4 401.8,390.5 484.8,390.5 465.5,408.4" fill="#a79ff0" stroke="#3a3090" stroke-width="1" stroke-linejoin="round" />
<polygon points="410.9,396.4 463.3,396.4 454.6,407.1 410.9,407.1" fill="#b0aefa" stroke="#2a2060" stroke-width="0.8" stroke-linejoin="round" />
<line x1="410.9" y1="396.2" x2="463.3" y2="396.2" stroke="#1a1040" stroke-width="1.4" />
<polygon points="394.8,407.6 411.3,391.4 414.2,391.4 397.8,407.6" fill="#4a3f98" stroke="#2a2060" stroke-width="0.5" stroke-linejoin="round" />
<line x1="454.6" y1="407.1" x2="471.3" y2="391.2" stroke="#2a2060" stroke-width="0.8" />
<polygon points="466.5,407.4 483,391.4 485.6,391.4 469,407.4" fill="#4a3f98" stroke="#2a2060" stroke-width="0.5" stroke-linejoin="round" />
<line x1="419.1" y1="391" x2="419.1" y2="408" stroke="#3a2f80" stroke-width="0.6" opacity=".5"/>
<rect x="383.5" y="408.4" width="82" height="102.2" fill="#9a8cd8" stroke="#3a3090" stroke-width="1" />
<line x1="384.5" y1="429" x2="464.5" y2="429" stroke="#3a2f80" stroke-width="0.7" opacity=".55"/>
<line x1="393.5" y1="431.5" x2="464.5" y2="431.5" stroke="#3a2f80" stroke-width="0.5" opacity=".35"/>
<line x1="384.5" y1="449" x2="464.5" y2="449" stroke="#3a2f80" stroke-width="0.7" opacity=".55"/>
<line x1="393.5" y1="451.5" x2="464.5" y2="451.5" stroke="#3a2f80" stroke-width="0.5" opacity=".35"/>
<line x1="384.5" y1="470" x2="464.5" y2="470" stroke="#3a2f80" stroke-width="0.7" opacity=".55"/>
<line x1="393.5" y1="472.5" x2="464.5" y2="472.5" stroke="#3a2f80" stroke-width="0.5" opacity=".35"/>
<line x1="384.5" y1="489.5" x2="464.5" y2="489.5" stroke="#3a2f80" stroke-width="0.7" opacity=".55"/>
<line x1="393.5" y1="492" x2="464.5" y2="492" stroke="#3a2f80" stroke-width="0.5" opacity=".35"/>
<line x1="419.5" y1="410.4" x2="419.5" y2="483" stroke="#3a2f80" stroke-width="0.7" opacity=".5"/>
<line x1="392" y1="411.4" x2="392" y2="507.6" stroke="#3a2f80" stroke-width="0.5" opacity=".4"/>
<line x1="394.5" y1="411.4" x2="394.5" y2="507.6" stroke="#3a2f80" stroke-width="0.5" opacity=".4"/>
<line x1="419.5" y1="483" x2="465.5" y2="483" stroke="#3a2f80" stroke-width="0.6" opacity=".5"/>
<rect x="392.5" y="414" width="3" height="8" fill="none" stroke="#3a2f80" stroke-width=".5" opacity=".6"/>
<rect x="392.5" y="440" width="3" height="8" fill="none" stroke="#3a2f80" stroke-width=".5" opacity=".6"/>
<rect x="392.5" y="460" width="3" height="8" fill="none" stroke="#3a2f80" stroke-width=".5" opacity=".6"/>
<rect x="392.5" y="483" width="3" height="8" fill="none" stroke="#3a2f80" stroke-width=".5" opacity=".6"/>
<path d="M408.5 424v6M408.5 434v8" stroke="#3a2f80" stroke-width=".6" opacity=".6"/>
<path d="M403 497.5h9m-7 0v8m5-8v8m-8 0h11" fill="none" stroke="#3a2f80" stroke-width=".6" opacity=".6"/>
<polygon points="465.5,408.4 468.1,405.8 468.1,508 465.5,510.6" fill="#5a4aa0" stroke="#2a2060" stroke-width="0.8" stroke-linejoin="round" />
<path d="M466 430.5l17-17.5M466 471.5l17-17.5" stroke="#1a1040" stroke-width="1.6" fill="none"/>
<path d="M472.5 427q6-1.5 8.5-5M473 466q6-1.5 8.5-5" stroke="#1a1040" stroke-width="1.3" fill="none"/>
<line x1="479.3" y1="396.1" x2="479.3" y2="491.3" stroke="#2a2060" stroke-width="0.6" opacity=".6"/>
<line x1="383.5" y1="509.6" x2="465.5" y2="509.6" stroke="#2a2060" stroke-width="1.6" />
<g fill="none" stroke="#6a6af8" stroke-width="1">
<rect x="382.7" y="408.4" width="89.4" height="119"/>
<rect x="400.4" y="390.6" width="89.4" height="119"/>
<path d="M382.7 408.4l17.7 -17.8"/>
<path d="M472.1 408.4l17.7 -17.8"/>
<path d="M382.7 527.4l17.7 -17.8"/>
<path d="M472.1 527.4l17.7 -17.8"/>
</g>
<rect x="375.8" y="401" width="6" height="6" fill="#000" stroke="#fff" stroke-width="1"/>
<rect x="375.8" y="465.2" width="6" height="6" fill="#000" stroke="#fff" stroke-width="1"/>
<rect x="375.8" y="529.2" width="6" height="6" fill="#000" stroke="none" stroke-width="1"/>
<rect x="424.6" y="401" width="6" height="6" fill="#000" stroke="#fff" stroke-width="1"/>
<rect x="424.6" y="529.2" width="6" height="6" fill="#000" stroke="none" stroke-width="1"/>
<rect x="473" y="401" width="6" height="6" fill="#000" stroke="#fff" stroke-width="1"/>
<rect x="473" y="465.2" width="6" height="6" fill="#000" stroke="#fff" stroke-width="1"/>
<rect x="473" y="529.2" width="6" height="6" fill="#000" stroke="none" stroke-width="1"/>
</svg>
<svg class="a" style="left:0;top:0" width="897" height="270" viewBox="0 0 897 270">
<defs><pattern id="dth" width="2" height="2" patternUnits="userSpaceOnUse"><rect width="2" height="2" fill="#d4d0c8"/><rect width="1" height="1" fill="#fff"/><rect x="1" y="1" width="1" height="1" fill="#fff"/></pattern></defs>
<g shape-rendering="crispEdges">
<rect x="4" y="42" width="889" height="1" fill="#808080"/>
<rect x="4" y="43" width="889" height="1" fill="#fff"/>
<rect x="6" y="46" width="1" height="26" fill="#fff"/>
<rect x="7" y="46" width="1" height="26" fill="#808080"/>
<rect x="8" y="46" width="1" height="26" fill="#fff"/>
<rect x="9" y="46" width="1" height="26" fill="#808080"/>
<rect x="88" y="48" width="1" height="22" fill="#808080"/>
<rect x="89" y="48" width="1" height="22" fill="#fff"/>
<rect x="118" y="48" width="1" height="22" fill="#808080"/>
<rect x="119" y="48" width="1" height="22" fill="#fff"/>
<rect x="172" y="48" width="1" height="22" fill="#808080"/>
<rect x="173" y="48" width="1" height="22" fill="#fff"/>
<rect x="274" y="48" width="1" height="22" fill="#808080"/>
<rect x="275" y="48" width="1" height="22" fill="#fff"/>
<rect x="328" y="48" width="1" height="22" fill="#808080"/>
<rect x="329" y="48" width="1" height="22" fill="#fff"/>
<rect x="358" y="48" width="1" height="22" fill="#808080"/>
<rect x="359" y="48" width="1" height="22" fill="#fff"/>
<rect x="388" y="48" width="1" height="22" fill="#808080"/>
<rect x="389" y="48" width="1" height="22" fill="#fff"/>
<rect x="538" y="48" width="1" height="22" fill="#808080"/>
<rect x="539" y="48" width="1" height="22" fill="#fff"/>
<rect x="726" y="48" width="1" height="22" fill="#808080"/>
<rect x="727" y="48" width="1" height="22" fill="#fff"/>
<rect x="568" y="44" width="1" height="30" fill="#808080"/>
<rect x="569" y="44" width="1" height="30" fill="#fff"/>
<rect x="572" y="46" width="1" height="26" fill="#fff"/>
<rect x="573" y="46" width="1" height="26" fill="#808080"/>
<rect x="574" y="46" width="1" height="26" fill="#fff"/>
<rect x="575" y="46" width="1" height="26" fill="#808080"/>
<rect x="876" y="44" width="1" height="30" fill="#808080"/>
<rect x="877" y="44" width="1" height="30" fill="#fff"/>
<rect x="4" y="74" width="877" height="1" fill="#808080"/>
<rect x="5" y="75" width="876" height="1" fill="#fff"/>
<rect x="4" y="74" width="1" height="33" fill="#808080"/>
<rect x="5" y="75" width="1" height="31" fill="#fff"/>
<rect x="8" y="78" width="1" height="26" fill="#fff"/>
<rect x="9" y="78" width="1" height="26" fill="#808080"/>
<rect x="10" y="78" width="1" height="26" fill="#fff"/>
<rect x="11" y="78" width="1" height="26" fill="#808080"/>
<rect x="42" y="79" width="1" height="23" fill="#808080"/>
<rect x="43" y="79" width="1" height="23" fill="#fff"/>
<rect x="121" y="79" width="1" height="23" fill="#808080"/>
<rect x="122" y="79" width="1" height="23" fill="#fff"/>
<rect x="174" y="79" width="1" height="23" fill="#808080"/>
<rect x="175" y="79" width="1" height="23" fill="#fff"/>
<rect x="228" y="79" width="1" height="23" fill="#808080"/>
<rect x="229" y="79" width="1" height="23" fill="#fff"/>
<rect x="306" y="79" width="1" height="23" fill="#808080"/>
<rect x="307" y="79" width="1" height="23" fill="#fff"/>
<rect x="336" y="79" width="1" height="23" fill="#808080"/>
<rect x="337" y="79" width="1" height="23" fill="#fff"/>
<rect x="476" y="79" width="1" height="23" fill="#808080"/>
<rect x="477" y="79" width="1" height="23" fill="#fff"/>
<rect x="554" y="79" width="1" height="23" fill="#808080"/>
<rect x="555" y="79" width="1" height="23" fill="#fff"/>
<rect x="608" y="79" width="1" height="23" fill="#808080"/>
<rect x="609" y="79" width="1" height="23" fill="#fff"/>
<rect x="686" y="79" width="1" height="23" fill="#808080"/>
<rect x="687" y="79" width="1" height="23" fill="#fff"/>
<rect x="740" y="79" width="1" height="23" fill="#808080"/>
<rect x="741" y="79" width="1" height="23" fill="#fff"/>
<rect x="770" y="79" width="1" height="23" fill="#808080"/>
<rect x="771" y="79" width="1" height="23" fill="#fff"/>
<rect x="366" y="75" width="1" height="31" fill="#808080"/>
<rect x="367" y="75" width="1" height="31" fill="#fff"/>
<rect x="370" y="78" width="1" height="26" fill="#fff"/>
<rect x="371" y="78" width="1" height="26" fill="#808080"/>
<rect x="372" y="78" width="1" height="26" fill="#fff"/>
<rect x="373" y="78" width="1" height="26" fill="#808080"/>
<rect x="880" y="75" width="1" height="31" fill="#808080"/>
<rect x="881" y="75" width="1" height="31" fill="#fff"/>
<rect x="4" y="106" width="889" height="1" fill="#808080"/>
<rect x="4" y="107" width="32" height="1" fill="#fff"/>
<rect x="6" y="110" width="28" height="1" fill="#fff"/>
<rect x="6" y="111" width="28" height="1" fill="#808080"/>
<rect x="6" y="112" width="28" height="1" fill="#fff"/>
<rect x="6" y="113" width="28" height="1" fill="#808080"/>
<rect x="8" y="143" width="25" height="1" fill="#808080"/>
<rect x="8" y="144" width="25" height="1" fill="#fff"/>
<rect x="4" y="262" width="32" height="1" fill="#808080"/>
<rect x="4" y="263" width="32" height="1" fill="#fff"/>
</g>
<g transform="translate(18,51)"><path d="M2.5 1.5h7l3 3v10h-10z" fill="#fff" stroke="#000"/><path d="M9.5 1.5v3h3" fill="none" stroke="#000"/></g>
<g transform="translate(41,51)"><path d="M1.5 13.5v-8.5h1.5l1-1h3l1 1h3.5v3" fill="#f4f0a0" stroke="#000"/><path d="M1.5 13.5l3-5.5h10.5l-3.5 5.5z" fill="#808000" stroke="#000"/><path d="M8.500 3.500q2.500-3 5.500-0.500" fill="none" stroke="#000" stroke-width="1"/><path d="M14.500 0.800v3h-3" fill="none" stroke="#000" stroke-width="1.100"/></g>
<g transform="translate(66,51)"><path d="M1.5 1.5h12l1 1v12h-13z" fill="#808000" stroke="#000"/><rect x="4" y="2" width="7.5" height="5" fill="#d4d0c8"/><rect x="12" y="2.2" width="1" height="1.2" fill="#fff"/><rect x="4" y="9.5" width="8" height="4.5" fill="#000"/><rect x="9.5" y="10.5" width="1.5" height="3" fill="#fff"/></g>
<g transform="translate(96,51)"><path d="M2.5 1.5h7l2 2v10h-9z" fill="#fff" stroke="#000"/><path d="M4.5 3.5q3-1 4.5 2" fill="none" stroke="#000" stroke-width=".8"/><path d="M7 8.5l4-4.5l4.5 4l-5 6.5l-3-2z" fill="#fff" stroke="#404040" stroke-width=".8"/><path d="M8 9.2l3.5-3.8M9.4 11l4-4.6M10.6 12.8l3.8-4.6" stroke="#1030e0" stroke-width="1.3"/><path d="M8.8 10.2l3.6-4M10 12l4-4.6" stroke="#e8e020" stroke-width="1"/></g>
<g transform="translate(125,51)"><path d="M4 6.5l1.5-5h7l-1.5 5" fill="#fff" stroke="#000"/><path d="M6 3.5h4.5M5.5 5h4.5" stroke="#000" stroke-width=".7"/><path d="M1.5 8.5l2-2h10l2 2v4h-1.5v1.5h-11v-1.5h-1.5z" fill="#d4d0c8" stroke="#000"/><path d="M1.5 9.5h14M3 12.5h11" stroke="#000" stroke-width=".8"/><rect x="7.5" y="10.2" width="3" height="1.2" fill="#e0d020"/><path d="M13.5 7l2 2" stroke="#808080" stroke-width=".8"/></g>
<g transform="translate(148,51)"><path d="M2.5 1.5h7l2 2v11h-9z" fill="#fff" stroke="#000"/><path d="M9.5 1.5v2h2" fill="none" stroke="#000" stroke-width=".8"/><circle cx="10" cy="9" r="2.8" fill="#40e0e0" stroke="#806000" stroke-width="1.3"/><path d="M12.2 11.4l3 3" stroke="#000" stroke-width="1.8"/></g>
<g transform="translate(180,51)"><path d="M2.5 2.5l10.5 10M13.5 2.5l-10.5 10.5" stroke="#000" stroke-width="2.3" fill="none"/><path d="M13 13l1.5 1.5" stroke="#000" stroke-width="1"/></g>
<g transform="translate(204,51)"><path d="M5.5 1.5l4 9M10.5 1.5l-4 9" stroke="#000" stroke-width="1.3" fill="none"/><circle cx="5" cy="12.3" r="1.9" fill="none" stroke="#000" stroke-width="1.1"/><circle cx="11" cy="12.3" r="1.9" fill="none" stroke="#000" stroke-width="1.1"/></g>
<g transform="translate(228,51)"><path d="M1.5 1.5h5l2 2v7h-7z" fill="#fff" stroke="#000"/><path d="M3 4.500h3M3 6.500h4M3 8.500h4" stroke="#000" stroke-width="1" shape-rendering="crispEdges"/><path d="M7.5 5.5h5l2 2v7h-7z" fill="#fff" stroke="#000"/><path d="M9 8.500h3M9 10.500h4M9 12.500h4" stroke="#000" stroke-width="1" shape-rendering="crispEdges"/></g>
<g transform="translate(252,51)"><path d="M1.5 3.500h11v10h-11z" fill="#808000" stroke="#000"/><path d="M4.5 4.5l1-2.500h3l1 2.500z" fill="#f0e060" stroke="#000" stroke-width=".8"/><path d="M7.500 8.500h5l2 2v5h-7z" fill="#fff" stroke="#000"/><path d="M9 11.500h3M9 13.500h4" stroke="#000" stroke-width="1" shape-rendering="crispEdges"/></g>
<g transform="translate(282,51)"><path d="M5 7.500q5-4.500 8 0.500q0.800 2-0.500 3.500" fill="none" stroke="#000" stroke-width="1.200"/><path d="M2.500 4.500v6.500h6z" fill="#000"/></g>
<g transform="translate(306,51)"><path d="M12 8.500q-5-4.500-8 0.500q-0.800 2 0.500 3.500" fill="none" stroke="#fff" stroke-width="1.4"/><path d="M14.500 5.500v6.500h-6z" fill="#fff"/><path d="M11 7.500q-5-4.500-8 0.500q-0.800 2 0.500 3.500" fill="none" stroke="#808080" stroke-width="1.4"/><path d="M13.500 4.500v6.500h-6z" fill="#808080"/></g>
<g transform="translate(335,51)"><path d="M1.500 5.500h10v9h-10z" fill="#fff" stroke="#000" stroke-width="1.200"/><path d="M3 8.500h2M6 8.500h4M3 10.500h2M6 10.500h4M3 12.500h2M6 12.500h4" stroke="#000" stroke-width=".9"/><path d="M4.500 5.500l3.500-3.500h5v4l-2.500 1.500l-2-1z" fill="#e8e8e8" stroke="#000" stroke-width=".9"/><rect x="13" y="1.500" width="2" height="5" fill="#000080"/><path d="M5.500 5.500l2.500-2.500M7 6l2.500-2.500M8.500 6.500l2.500-2.500" stroke="#606060" stroke-width=".6"/></g>
<g transform="translate(365,51)"><rect x="1.500" y="1.500" width="13" height="12" fill="#fff" stroke="#000" stroke-width="1.300"/><rect x="2" y="2" width="12" height="2.500" fill="#000"/><rect x="3.500" y="2.600" width="7" height="1" fill="#2020e0"/><path d="M3.500 7.500l1.500 1.500l3-3M3.500 10.500l1.500 1.500l3-3" fill="none" stroke="#000" stroke-width="1.300"/></g>
<g transform="translate(396,51)"><rect x="1.500" y="1.500" width="12" height="10" fill="#fff" stroke="#808080"/><rect x="2" y="2" width="11" height="2" fill="#2a6ad8"/><rect x="11.600" y="2" width="1.400" height="1.600" fill="#e02020"/><rect x="7" y="5" width="8.500" height="10" fill="#00e8e8" stroke="#000" stroke-width="1"/><path d="M7 8.300h8.500M7 11.500h8.500M11.200 11.500v3.500" stroke="#000" stroke-width=".9"/><path d="M8 6.700h6.500M8 9.900h6.500" stroke="#fff" stroke-width=".8" stroke-dasharray="1 1"/></g>
<g transform="translate(420,51)"><rect x="1.500" y="1.500" width="12" height="10" fill="#fff" stroke="#808080"/><rect x="2" y="2" width="11" height="2" fill="#2a6ad8"/><rect x="11.600" y="2" width="1.400" height="1.600" fill="#e02020"/><circle cx="10" cy="9.500" r="3.300" fill="#e0e0f0" stroke="#606060" stroke-width="1.200"/><path d="M10 7.600l1.900 1.900l-1.900 1.900l-1.900-1.900z" fill="#1010c0"/><path d="M12.500 12l3 3" stroke="#000" stroke-width="1.700"/></g>
<g transform="translate(444,51)"><rect x="1.500" y="1.500" width="12" height="10" fill="#fff" stroke="#808080"/><rect x="2" y="2" width="11" height="2" fill="#2a6ad8"/><rect x="11.600" y="2" width="1.400" height="1.600" fill="#e02020"/><path d="M7.500 6v9M7.500 7h7M7.500 10.500h7M7.500 14h7" stroke="#000" stroke-width=".9" stroke-dasharray="1.500 1" fill="none"/><rect x="6" y="5.500" width="3" height="3" fill="#f0e020" stroke="#000" stroke-width=".7"/><rect x="10" y="9" width="3" height="3" fill="#f0e020" stroke="#000" stroke-width=".7"/><rect x="10" y="12.500" width="3" height="3" fill="#f0e020" stroke="#000" stroke-width=".7"/></g>
<g transform="translate(468,51)"><rect x="1.500" y="1.500" width="12" height="10" fill="#fff" stroke="#808080"/><rect x="2" y="2" width="11" height="2" fill="#2a6ad8"/><rect x="11.600" y="2" width="1.400" height="1.600" fill="#e02020"/><path d="M2.500 6v9M15.500 6v9M3.500 10.500h11" stroke="#000" stroke-width="1.200" fill="none"/><path d="M3 10.500l3-2v4zM15 10.500l-3-2v4z" fill="#000"/></g>
<g transform="translate(492,51)"><rect x="1.500" y="1.500" width="12" height="10" fill="#fff" stroke="#808080"/><rect x="2" y="2" width="11" height="2" fill="#2a6ad8"/><rect x="11.600" y="2" width="1.400" height="1.600" fill="#e02020"/><circle cx="8" cy="8.500" r="3" fill="#f8f080" stroke="#c8c060" stroke-width=".6"/><rect x="6.800" y="11.300" width="2.400" height="2.500" fill="#807020"/><rect x="7.200" y="13.800" width="1.600" height="1.400" fill="#202020"/></g>
<g transform="translate(516,51)"><rect x="1.500" y="1.500" width="12" height="10" fill="#fff" stroke="#808080"/><rect x="2" y="2" width="11" height="2" fill="#2a6ad8"/><rect x="11.600" y="2" width="1.400" height="1.600" fill="#e02020"/><circle cx="11.500" cy="11" r="4" fill="#f0e800" stroke="#000" stroke-width="1.100"/><path d="M10.500 10l1.300-1.200v4.500M10 13.300h3" stroke="#806000" stroke-width="1" fill="none"/></g>
<g transform="translate(545,51)"><path d="M13 4.500v-2.500h-10l5 6l-5 6.500h10.500v-3" fill="none" stroke="#000" stroke-width="1.250"/></g>
<g transform="translate(583,51)"><path d="M1.500 2v12.500" stroke="#a00000" stroke-width="1.100"/><path d="M2.500 8.500h6M2.500 8.500l2.500-2.500M2.500 8.500l2.500 2.500" stroke="#000" stroke-width="1" fill="none"/><rect x="8.5" y="3.5" width="4.5" height="6" fill="none" stroke="#0000ff" stroke-width="1"/><rect x="11" y="5.5" width="4.5" height="6" fill="#d4d0c8" stroke="#0000ff" stroke-width="1"/></g>
<g transform="translate(607,51)"><path d="M15.500 2v12.500" stroke="#a00000" stroke-width="1.100"/><path d="M8 8.500h6M14 8.500l-2.500-2.500M14 8.500l-2.500 2.500" stroke="#000" stroke-width="1" fill="none"/><rect x="1.5" y="3.5" width="4.5" height="6" fill="none" stroke="#0000ff" stroke-width="1"/><rect x="3.5" y="5.5" width="4.5" height="6" fill="#d4d0c8" stroke="#0000ff" stroke-width="1"/></g>
<g transform="translate(631,51)"><path d="M2 1.500h12.500" stroke="#a00000" stroke-width="1.100"/><path d="M8.500 2v6M8.500 2l-2.500 2.500M8.500 2l2.500 2.500" stroke="#000" stroke-width="1" fill="none"/><rect x="4.5" y="8.5" width="5.5" height="5" fill="none" stroke="#0000ff" stroke-width="1"/><rect x="7" y="10" width="5.5" height="5" fill="#d4d0c8" stroke="#0000ff" stroke-width="1"/></g>
<g transform="translate(655,51)"><path d="M2 14.500h12.500" stroke="#a00000" stroke-width="1.100"/><path d="M8.500 7.500v6M8.500 13.500l-2.500-2.500M8.500 13.500l2.500-2.500" stroke="#000" stroke-width="1" fill="none"/><rect x="4.5" y="0.5" width="5.5" height="5" fill="none" stroke="#0000ff" stroke-width="1"/><rect x="7" y="2.5" width="5.5" height="5" fill="#d4d0c8" stroke="#0000ff" stroke-width="1"/></g>
<g transform="translate(679,51)"><rect x="10.5" y="0.5" width="5" height="7" fill="none" stroke="#0000ff" stroke-width=".8"/><rect x="9.25" y="1.75" width="5" height="7" fill="#d4d0c8" stroke="#0000ff" stroke-width=".8"/><rect x="8" y="3" width="5" height="7" fill="#d4d0c8" stroke="#0000ff" stroke-width=".8"/><rect x="2.500" y="5" width="9" height="10" fill="#c0bcb4" stroke="#a00000" stroke-width="1.400"/><path d="M4.500 13l5-6M4.500 13v-3M4.500 13h3M9.500 7v3M9.500 7h-3" stroke="#000" stroke-width="1" fill="none"/></g>
<g transform="translate(703,51)"><rect x="6.500" y="0.700" width="9" height="10" fill="none" stroke="#a00000" stroke-width="1.400"/><path d="M8.500 8.500l5-6M13.500 2.500v3M13.500 2.500h-3" stroke="#000" stroke-width="1.100" fill="none"/><path d="M1.500 7.500l2.500-3h6l-2.500 3zM1.500 7.500h6v7h-6zM7.500 7.500l2.500-3v7l-2.500 3z" fill="#d4d0c8" stroke="#0000ff" stroke-width="1"/></g>
<g transform="translate(733,51)"><g transform="translate(1,1)" stroke="#fff" fill="none"><rect x="1.500" y="2.500" width="11" height="3.500"/><rect x="5.500" y="9.500" width="11" height="3.500"/><path d="M5 11.500h-4M1 11.500l2-2M1 11.500l2 2"/></g><g stroke="#808080" fill="none"><rect x="1.500" y="2.500" width="11" height="3.500"/><rect x="5.500" y="9.500" width="11" height="3.500"/><path d="M5 11.500h-4M1 11.500l2-2M1 11.500l2 2"/></g></g>
<g transform="translate(757,51)"><g transform="translate(1,1)" stroke="#fff" fill="none"><rect x="5.500" y="2.500" width="11" height="3.500"/><rect x="1.500" y="9.500" width="11" height="3.500"/><path d="M13 11.500h4M17 11.500l-2-2M17 11.500l-2 2"/></g><g stroke="#808080" fill="none"><rect x="5.500" y="2.500" width="11" height="3.500"/><rect x="1.500" y="9.500" width="11" height="3.500"/><path d="M13 11.500h4M17 11.500l-2-2M17 11.500l-2 2"/></g></g>
<g transform="translate(782,51)"><g transform="translate(1,1)" stroke="#fff" fill="none"><rect x="2.500" y="0.500" width="3.500" height="10"/><rect x="9.500" y="7.500" width="4" height="8"/><path d="M11.500 6.500v-6M11.500 0.500l-2 2M11.500 0.500l2 2"/></g><g stroke="#808080" fill="none"><rect x="2.500" y="0.500" width="3.500" height="10"/><rect x="9.500" y="7.500" width="4" height="8"/><path d="M11.500 6.500v-6M11.500 0.500l-2 2M11.500 0.500l2 2"/></g></g>
<g transform="translate(806,51)"><g transform="translate(1,1)" stroke="#fff" fill="none"><rect x="2.500" y="5" width="4" height="10"/><rect x="9.500" y="0.500" width="4" height="8.500"/><path d="M11.500 9.500v6M11.500 15.500l-2-2M11.500 15.500l2-2"/></g><g stroke="#808080" fill="none"><rect x="2.500" y="5" width="4" height="10"/><rect x="9.500" y="0.500" width="4" height="8.500"/><path d="M11.500 9.500v6M11.500 15.500l-2-2M11.500 15.500l2-2"/></g></g>
<g transform="translate(830,51)"><g transform="translate(1,1)" stroke="#fff" fill="none"><path d="M3.500 1.500h9.500l-3 2.500h-9.500zM0.500 4v2h9.500l3-2.500v-2M10 4v2"/><path d="M7.500 6.500h9l-3 2.500h-9zM4.500 9v2h9l3-2.500v-2M13.500 9v2"/><path d="M3 15.500l4-4.500M3 15.500v-2.500M3 15.500h2.500"/></g><g stroke="#808080" fill="none"><path d="M3.500 1.500h9.500l-3 2.500h-9.500zM0.500 4v2h9.500l3-2.500v-2M10 4v2"/><path d="M7.500 6.500h9l-3 2.500h-9zM4.500 9v2h9l3-2.500v-2M13.500 9v2"/><path d="M3 15.500l4-4.500M3 15.500v-2.500M3 15.500h2.500"/></g></g>
<g transform="translate(854,51)"><g transform="translate(1,1)" stroke="#fff" fill="none"><path d="M4 6.500h11.500l-4 3h-11zM0.500 9.500v2h11l4-3v-2M0.500 11.500v2h11l4-3v-2M0.500 13.500v1.500h11l4-3v-1.500M11.500 9.500v5.500"/><path d="M9.500 5.500l5-5M14.500 0.500v2.500M14.500 0.500h-2.500"/></g><g stroke="#808080" fill="none"><path d="M4 6.500h11.500l-4 3h-11zM0.500 9.500v2h11l4-3v-2M0.500 11.500v2h11l4-3v-2M0.500 13.500v1.500h11l4-3v-1.500M11.500 9.500v5.500"/><path d="M9.500 5.500l5-5M14.500 0.500v2.500M14.500 0.500h-2.500"/></g></g>

<rect x="450" y="80" width="24" height="22" fill="url(#dth)"/><path d="M450.5 101.500v-21h23.500" fill="none" stroke="#808080"/><path d="M473.5 80.500v21h-23.500" fill="none" stroke="#fff"/>
<rect x="480" y="80" width="24" height="22" fill="url(#dth)"/><path d="M480.5 101.500v-21h23.500" fill="none" stroke="#808080"/><path d="M503.5 80.500v21h-23.500" fill="none" stroke="#fff"/>
<rect x="504" y="80" width="24" height="22" fill="url(#dth)"/><path d="M504.5 101.500v-21h23.500" fill="none" stroke="#808080"/><path d="M527.5 80.500v21h-23.500" fill="none" stroke="#fff"/>
<rect x="558" y="80" width="24" height="22" fill="url(#dth)"/><path d="M558.5 101.500v-21h23.500" fill="none" stroke="#808080"/><path d="M581.5 80.500v21h-23.500" fill="none" stroke="#fff"/>
<rect x="660" y="80" width="24" height="22" fill="url(#dth)"/><path d="M660.5 101.500v-21h23.500" fill="none" stroke="#808080"/><path d="M683.5 80.500v21h-23.500" fill="none" stroke="#fff"/>
<g transform="translate(19,82)"><rect x="0.2" y="0.8" width="2.800" height="2.800" fill="#000"/><rect x="0.2" y="6.6" width="2.800" height="2.800" fill="#000"/><rect x="0.2" y="12.4" width="2.800" height="2.800" fill="#000"/><rect x="6.4" y="0.8" width="2.800" height="2.800" fill="#000"/><rect x="6.4" y="12.4" width="2.800" height="2.800" fill="#000"/><rect x="12.8" y="0.8" width="2.800" height="2.800" fill="#000"/><rect x="12.8" y="6.6" width="2.800" height="2.800" fill="#000"/><rect x="12.8" y="12.4" width="2.800" height="2.800" fill="#000"/><rect x="3.500" y="5" width="6" height="4" fill="#fff" stroke="#000080" stroke-width="1.300"/><rect x="6.500" y="7" width="6" height="4" fill="#fff" stroke="#000080" stroke-width="1.300"/></g>
<g transform="translate(50,82)"><path d="M8 1v9M3.500 5.500h9" stroke="#000" stroke-width="3.200"/><path d="M8 2v7M4.500 5.500h7" stroke="#fff" stroke-width="1.200"/><rect x="3.500" y="11.500" width="9" height="3" fill="#fff" stroke="#000" stroke-width="1.100"/></g>
<g transform="translate(74,82)"><ellipse cx="8" cy="10" rx="7" ry="3" fill="none" stroke="#0000ff" stroke-width="1.200"/><path d="M5.500 1.500v11l2.500-2.500l2 4.500l2-1l-2-4.500h3.500z" fill="#fff" stroke="#000" stroke-width="1"/></g>
<g transform="translate(98,82)"><path d="M5.500 14.500v-8.500l5-4.500v3.500l2.500-1.500l-3 6l-1.500-0.500z" fill="#fff" stroke="#000" stroke-width="1.200" stroke-linejoin="round"/></g>
<g transform="translate(127,82)"><rect x="2.500" y="3.500" width="9" height="8" fill="none" stroke="#fff" stroke-width="1.200"/><rect x="1.500" y="2.500" width="9" height="8" fill="none" stroke="#808080" stroke-width="1.200"/><rect x="5.500" y="6.500" width="9" height="8" fill="#d4d0c8" stroke="#fff" stroke-width="1.200"/><rect x="4.500" y="5.500" width="9" height="8" fill="#d4d0c8" stroke="#808080" stroke-width="1.200"/><rect x="0" y="1" width="2.600" height="2.600" fill="#808080"/><rect x="13" y="1" width="2.600" height="2.600" fill="#808080"/><rect x="0" y="13" width="2.600" height="2.600" fill="#808080"/><rect x="13" y="13" width="2.600" height="2.600" fill="#808080"/></g>
<g transform="translate(151,82)"><rect x="1.500" y="2.500" width="8" height="8" fill="none" stroke="#0000ff" stroke-width="1.300"/><rect x="5.500" y="6.500" width="9" height="8" fill="#d4d0c8" stroke="#0000ff" stroke-width="1.300"/><rect x="0.2" y="1.2" width="2.600" height="2.600" fill="#000"/><rect x="8.2" y="1.2" width="2.600" height="2.600" fill="#000"/><rect x="0.2" y="9.2" width="2.600" height="2.600" fill="#000"/><rect x="4.2" y="5.2" width="2.600" height="2.600" fill="#000"/><rect x="13.2" y="5.2" width="2.600" height="2.600" fill="#000"/><rect x="4.2" y="13.2" width="2.600" height="2.600" fill="#000"/><rect x="13.2" y="13.2" width="2.600" height="2.600" fill="#000"/></g>
<g transform="translate(181,82)"><path d="M8 1v15" stroke="#0000ff" stroke-width="1.300"/><path d="M6 1.500h4M6 15.500h4" stroke="#0000ff" stroke-width="1.200"/><path d="M9 5q4 0.500 4 3q0 2-3 2.500M7 5q-3.500 0.500-3.500 3q0 1.500 1.500 2.200" fill="none" stroke="#000" stroke-width="1.100"/><path d="M4.500 11.800h6.500l-3.200-4z" fill="#000"/></g>
<g transform="translate(206,82)"><path d="M8 1v15" stroke="#0000ff" stroke-width="1.300"/><path d="M6 1.500h4M6 15.500h4" stroke="#0000ff" stroke-width="1.200"/><path d="M7 5q-4 0.500-4 3q0 2 3 2.500M9 5q3.500 0.500 3.500 3q0 1.500-1.500 2.200" fill="none" stroke="#000" stroke-width="1.100"/><path d="M11.500 11.800h-6.500l3.200-4z" fill="#000"/></g>
<g transform="translate(235,82)"><path d="M8.500 3.500q-5 0-5 4.800q0 4.700 4.700 4.700q3.500 0 4.500-3" fill="none" stroke="#000" stroke-width="1.400"/><path d="M8 0.500l4 3l-4 3z" fill="#000"/></g>
<g transform="translate(259,82)"><path d="M8 2v12M2 8h12" stroke="#000" stroke-width="1.300"/><path d="M8 0.500l2.500 3h-5zM8 15.500l2.500-3h-5zM0.500 8l3-2.500v5zM15.500 8l-3-2.500v5z" fill="#000"/></g>
<g transform="translate(284,82)"><path d="M6.500 2.500v11h-5z" fill="#fff" stroke="#000" stroke-width="1"/><path d="M9.500 2.500v11h5z" fill="#a000a0" stroke="#000" stroke-width="1"/></g>
<g transform="translate(313,82)"><path d="M2.500 2.500h12v4h-6l-2 2.500v5.500h-4z" fill="#d4d0c8" stroke="#000" stroke-width="1.300" stroke-linejoin="round"/><path d="M2.500 6.500h6" stroke="#000" stroke-width="1"/></g>
<g transform="translate(343,82)"><circle cx="8" cy="8" r="7" fill="none" stroke="#a00000" stroke-width="1.150"/><circle cx="8" cy="8" r="3.800" fill="none" stroke="#a00000" stroke-width="1.050"/><path d="M8 0v5.500M8 10.500v5.500M0 8h5.500M10.500 8h5.500" stroke="#a00000" stroke-width="1.100"/></g>
<g transform="translate(381,82)"><path d="M3.500 6.500h8v8h-8z" fill="none" stroke="#000" stroke-width="1.2" stroke-linejoin="round"/><path d="M3.500 6.500l2.500-3h8l-2.500 3z" fill="none" stroke="#000" stroke-width="1.2" stroke-linejoin="round"/><path d="M11.500 6.500l2.500-3v8l-2.500 3z" fill="none" stroke="#000" stroke-width="1.2" stroke-linejoin="round"/><path d="M6 3.500v8h8M6 11.500l-2.500 3" fill="none" stroke="#000" stroke-width="1"/></g>
<g transform="translate(405,82)"><path d="M3.500 6.500h8v8h-8z" fill="#fff" stroke="#000" stroke-width="1.2" stroke-linejoin="round"/><path d="M3.500 6.500l2.500-3h8l-2.500 3z" fill="#fff" stroke="#000" stroke-width="1.2" stroke-linejoin="round"/><path d="M11.500 6.500l2.500-3v8l-2.500 3z" fill="#fff" stroke="#000" stroke-width="1.2" stroke-linejoin="round"/></g>
<g transform="translate(429,82)"><path d="M3.500 6.500h8v8h-8z" fill="#00ffff" stroke="#000" stroke-width="1.2" stroke-linejoin="round"/><path d="M3.500 6.500l2.500-3h8l-2.500 3z" fill="#00ffff" stroke="#000" stroke-width="1.2" stroke-linejoin="round"/><path d="M11.500 6.500l2.500-3v8l-2.500 3z" fill="#00d8d8" stroke="#000" stroke-width="1.2" stroke-linejoin="round"/></g>
<g transform="translate(454,82)"><path d="M3.500 6.500h8v8h-8z" fill="#00e0e0" stroke="#000" stroke-width="1.2" stroke-linejoin="round"/><path d="M3.500 6.500l2.500-3h8l-2.500 3z" fill="#20f0f0" stroke="#000" stroke-width="1.2" stroke-linejoin="round"/><path d="M11.500 6.500l2.500-3v8l-2.500 3z" fill="#00c0c0" stroke="#000" stroke-width="1.2" stroke-linejoin="round"/><path d="M5 8.500q2 3 1 5M8 7.500q2 2 1.500 6M6 12.500q3-1 4-4" fill="none" stroke="#008888" stroke-width=".9"/></g>
<g transform="translate(484,82)"><path d="M3.500 6.500h8v8h-8z" fill="none" stroke="#000" stroke-width="1.1" stroke-linejoin="round"/><path d="M3.500 6.500l2.500-3h8l-2.500 3z" fill="none" stroke="#000" stroke-width="1.1" stroke-linejoin="round"/><path d="M11.500 6.500l2.500-3v8l-2.500 3z" fill="none" stroke="#000" stroke-width="1.1" stroke-linejoin="round"/></g>
<g transform="translate(508,82)"><path d="M3.500 6.500h8v8h-8z" fill="none" stroke="#000" stroke-width="1.1" stroke-linejoin="round"/><path d="M3.500 6.500l2.500-3h8l-2.500 3z" fill="none" stroke="#000" stroke-width="1.1" stroke-linejoin="round"/><path d="M11.500 6.500l2.500-3v8l-2.500 3z" fill="none" stroke="#000" stroke-width="1.1" stroke-linejoin="round"/><path d="M6 3.500v8h8M6 11.500l-2.500 3" fill="none" stroke="#404040" stroke-width=".8"/><rect x="5.500" y="9" width="4" height="4" fill="none" stroke="#806040" stroke-width=".6"/></g>
<g transform="translate(532,82)"><path d="M3.500 6.500h8v8h-8z" fill="#00a0a0" stroke="none" stroke-width="0" stroke-linejoin="round"/><path d="M3.500 6.500l2.500-3h8l-2.500 3z" fill="#00e8f8" stroke="none" stroke-width="0" stroke-linejoin="round"/><path d="M11.500 6.500l2.500-3v8l-2.500 3z" fill="#000000" stroke="none" stroke-width="0" stroke-linejoin="round"/></g>
<g transform="translate(562,82)"><text x="2.500" y="10.500" font-family="Liberation Serif,serif" font-weight="bold" font-size="10" fill="#000">a</text><text x="8" y="14" font-family="Liberation Serif,serif" font-weight="bold" font-size="13.500" fill="#000">a</text></g>
<g transform="translate(586,82)"><path d="M8 1.200a4.800 4.800 0 0 1 3 8.500l-0.500 1.800h-5l-0.500-1.800a4.800 4.800 0 0 1 3-8.500z" fill="#f8f060" stroke="#a0a0a0" stroke-width=".9"/><path d="M6.500 6v3.500M9.500 6v3.500M6.500 6.500h3" stroke="#c0a000" stroke-width=".7" fill="none"/><rect x="6" y="11.200" width="4" height="2.600" fill="#706010"/><rect x="6.700" y="13.800" width="2.600" height="1.400" fill="#101010"/></g>
<g transform="translate(615,82)"><path d="M3 6q-2.500-3 1-4q2-0.500 4 0.800q2 1 4-0.300" fill="none" stroke="#000" stroke-width="1.200"/><path d="M3.500 9l4.500-4.500l6 4l-5 6.500l-4-2.500z" fill="#fff" stroke="#000" stroke-width="1"/><path d="M5.500 9.800l3.500-3.600M7 11.500l4-4.300M8.500 13.200l4-4.600" stroke="#1030e0" stroke-width="1.200"/><path d="M6.200 10.700l3.800-4M7.800 12.400l4-4.400" stroke="#e8e020" stroke-width="1"/></g>
<g transform="translate(639,82)"><path d="M1.500 4v9M14.500 4v9M2.500 8.500h11" stroke="#000" stroke-width="1.200"/><path d="M2 8.500l3-2.200v4.400zM14 8.500l-3-2.200v4.400z" fill="#000"/><path d="M6 4.500q1-1.500 2 0q1 1 2-0.500" fill="none" stroke="#000" stroke-width=".9"/></g>
<g transform="translate(664,82)"><path d="M2.500 1v15M6.500 1v15M10.500 1v15M14.500 1v15M1 2.500h15M1 6.500h15M1 10.500h15M1 14.500h15" stroke="#a00000" stroke-width="1.250" fill="none"/></g>
<g transform="translate(693,82)"><path d="M2 12v-4.500a6 6 0 0 1 12 0v4.500h-3.300v-4.500a2.700 2.700 0 0 0-5.400 0v4.500z" fill="#e00000" stroke="#900000" stroke-width=".5"/><rect x="2" y="11.500" width="3.300" height="3" fill="#fff" stroke="#808080" stroke-width=".5"/><rect x="10.700" y="11.500" width="3.300" height="3" fill="#fff" stroke="#808080" stroke-width=".5"/></g>
<g transform="translate(717,82)"><path d="M10 2h5v5zM6 14h-5v-5z" fill="#808080"/><circle cx="8" cy="8" r="7" fill="none" stroke="#a00000" stroke-width="1.150"/><circle cx="8" cy="8" r="3.800" fill="none" stroke="#a00000" stroke-width="1.050"/><path d="M8 0v5.500M8 10.500v5.500M0 8h5.500M10.500 8h5.500" stroke="#a00000" stroke-width="1.100"/><path d="M8 4.500v7M4.500 8h7M5.800 5.800l4.400 4.400M10.200 5.800l-4.400 4.400" stroke="#0000ff" stroke-width="1.050"/></g>
<g transform="translate(747,82)"><circle cx="8" cy="8" r="7" fill="none" stroke="#a00000" stroke-width="1.150"/><circle cx="8" cy="8" r="3.800" fill="none" stroke="#a00000" stroke-width="1.050"/><path d="M8 0v5.500M8 10.500v5.500M0 8h5.500M10.500 8h5.500" stroke="#a00000" stroke-width="1.100"/></g>
<g transform="translate(777,82)"><circle cx="6.500" cy="6.500" r="5" fill="#e8e8e8" stroke="#000" stroke-width="1.200"/><path d="M10.300 10.300l4.500 4.500" stroke="#000" stroke-width="2.200"/><path d="M10.500 10.500l4 4" stroke="#808080" stroke-width=".7"/><path d="M6.500 3.500v6M3.500 6.500h6" stroke="#000080" stroke-width="1.800"/></g>
<g transform="translate(857,82)"><circle cx="6.500" cy="6.500" r="5" fill="#e8e8e8" stroke="#000" stroke-width="1.200"/><path d="M10.300 10.300l4.500 4.500" stroke="#000" stroke-width="2.200"/><path d="M10.500 10.500l4 4" stroke="#808080" stroke-width=".7"/><path d="M3.500 6.500h6" stroke="#000080" stroke-width="1.800"/></g>
<rect x="799" y="81" width="53" height="19" fill="#fff"/><path d="M799.500 99.500v-18h52" fill="none" stroke="#808080"/><path d="M800.500 98.500v-16h50" fill="none" stroke="#404040"/><path d="M851.500 81.500v18h-52" fill="none" stroke="#fff"/><path d="M850.500 82.500v16h-50" fill="none" stroke="#d4d0c8"/>
<rect x="835" y="83" width="15" height="15" fill="#d4d0c8"/><path d="M835.500 97v-13.500h14" fill="none" stroke="#fff"/><path d="M849.500 83.500v14h-14" fill="none" stroke="#404040"/><path d="M848.500 84.500v12h-12" fill="none" stroke="#808080"/><path d="M839 88.500h7l-3.500 3.500z" fill="#000"/>
<rect x="8" y="118" width="24" height="22" fill="url(#dth)"/><path d="M8.500 139.500v-21h23.500" fill="none" stroke="#808080"/><path d="M31.500 118.500v21h-23.500" fill="none" stroke="#fff"/>
<g transform="translate(12,122)"><path d="M4.500 0.500v11.500l2.800-2.600l2.200 4.800l1.900-0.900l-2.200-4.700h3.800z" fill="#fff" stroke="#000" stroke-width="1.100" stroke-linejoin="round"/></g>
<g transform="translate(12,150)"><path d="M0.500 10l4-3.500h10.500l-4 3.500z" fill="#fff" stroke="#000" stroke-width="1.100"/><path d="M0.500 10v1.800h10.500l4-3.500v-1.800" fill="#fff" stroke="#000" stroke-width="1.100"/><path d="M7.200 1.800v3.500M1.400 2.500l2.900 3.200M12.900 2.500l-2.300 3.200M1.400 15l2.900-2.400M7.200 16v-3.400M12.900 15l-2.300-2.400" stroke="#000" stroke-width="1.100"/></g>
<g transform="translate(12,173)"><path d="M3.500 2.500h5.500l2.500 2.500v5h-8z" fill="none" stroke="#fff" stroke-width="1.100"/><path d="M2.500 1.500h5.500l2.500 2.500v5h-8z" fill="none" stroke="#808080" stroke-width="1.100"/><path d="M5.500 5.500h6.500l3 3v6h-9.500z" fill="#d4d0c8" stroke="#fff" stroke-width="1.100"/><path d="M4.500 4.500h6.500l3 3v6h-9.500z" fill="#d4d0c8" stroke="#808080" stroke-width="1.100"/></g>
<g transform="translate(11,195)"><path d="M1.500 1.500v13.500" stroke="#a00000" stroke-width="1.100"/><path d="M2.500 8.500h6M2.500 8.500l2.500-2.500M2.500 8.500l2.500 2.500" stroke="#000" fill="none"/><rect x="8.500" y="4.500" width="4.500" height="5.500" fill="none" stroke="#0000ff" stroke-width="1.100"/><rect x="10.500" y="6.500" width="5" height="6" fill="#d4d0c8" stroke="#0000ff" stroke-width="1.100"/><path d="M14 0.300l3.500 2l-3.500 2z" fill="#000"/></g>
<g transform="translate(11,217)"><g transform="translate(1,1)" stroke="#fff" fill="none"><rect x="1.500" y="2.500" width="8.500" height="3.300"/><rect x="7.500" y="9.500" width="8.500" height="3.500"/><path d="M6.500 11.500h-5.500M1 11.500l2-2M1 11.500l2 2"/></g><g stroke="#808080" fill="none"><rect x="1.500" y="2.500" width="8.500" height="3.300"/><rect x="7.500" y="9.500" width="8.500" height="3.500"/><path d="M6.500 11.500h-5.500M1 11.500l2-2M1 11.500l2 2"/></g><path d="M14 0.300l3.500 2l-3.500 2z" fill="#808080"/></g>
<g transform="translate(11,239)"><circle cx="6.600" cy="6.200" r="5.300" fill="none" stroke="#000" stroke-width="1.200"/><path d="M10.500 10.200l5 5" stroke="#000" stroke-width="2.100"/><path d="M14 0.300l3.500 2l-3.500 2z" fill="#000"/></g>

</svg>
<svg class="a" style="left:0;top:0" width="897" height="652" viewBox="0 0 897 652">
<circle cx="14" cy="13" r="8" fill="#0000e0" stroke="#000060" stroke-width=".6"/><path d="M14 6.500l4.500 5h-2.700v6.500h-3.600v-6.500h-2.700z" fill="#fff"/>
<rect x="845" y="15" width="6" height="2" fill="#000"/>
<rect x="860.500" y="8.500" width="9" height="8" fill="none" stroke="#000"/><rect x="860" y="8" width="10" height="2" fill="#000"/>
<path d="M879.500 9l7 7M886.500 9l-7 7" stroke="#000" stroke-width="1.600" fill="none"/>
<path d="M880 117h7.500l-3.750-4z" fill="#000"/><path d="M880 553h7.500l-3.750 4z" fill="#000"/>
<path d="M47 567v7.500l-4-3.750z" fill="#000"/><path d="M866 567v7.500l4-3.750z" fill="#000"/>
<path d="M45.9 579.500L48.3 592Q48.9 595.500 51.7 595.500H118.8Q121.6 595.500 122.2 592L124.6 579.500Z" fill="#fff"/>
<path d="M123.4 579.500L125.8 592Q126.4 595.500 129.2 595.500H202.5Q205.3 595.500 205.9 592L208.3 579.500Z" fill="#d4d0c8"/>
<path d="M207.1 579.500L209.5 592Q210.1 595.500 212.9 595.500H237.4Q240.2 595.500 240.8 592L243.2 579.500Z" fill="#fff"/>
<path d="M242.0 579.500L244.4 592Q245.0 595.500 247.8 595.500H328.3Q331.1 595.500 331.7 592L334.1 579.500Z" fill="#fff"/>
<path d="M332.9 579.500L335.3 592Q335.9 595.500 338.7 595.500H418.3Q421.1 595.500 421.7 592L424.1 579.500Z" fill="#fff"/>
<path d="M422.9 579.500L425.3 592Q425.9 595.500 428.7 595.500H494.3Q497.1 595.500 497.7 592L500.1 579.500Z" fill="#fff"/>
<path d="M498.9 579.500L501.3 592Q501.9 595.500 504.7 595.500H588.3Q591.1 595.500 591.7 592L594.1 579.500Z" fill="#fff"/>
<path d="M45.9 579.500L48.3 592Q48.9 595.500 51.7 595.500H118.8Q121.6 595.500 122.2 592L124.6 579.500" fill="none" stroke="#000" stroke-width="1.100"/>
<path d="M123.4 579.500L125.8 592Q126.4 595.500 129.2 595.500H202.5Q205.3 595.500 205.9 592L208.3 579.500" fill="none" stroke="#000" stroke-width="1.100"/>
<path d="M207.1 579.500L209.5 592Q210.1 595.500 212.9 595.500H237.4Q240.2 595.500 240.8 592L243.2 579.500" fill="none" stroke="#000" stroke-width="1.100"/>
<path d="M242.0 579.500L244.4 592Q245.0 595.500 247.8 595.500H328.3Q331.1 595.500 331.7 592L334.1 579.500" fill="none" stroke="#000" stroke-width="1.100"/>
<path d="M332.9 579.500L335.3 592Q335.9 595.500 338.7 595.500H418.3Q421.1 595.500 421.7 592L424.1 579.500" fill="none" stroke="#000" stroke-width="1.100"/>
<path d="M422.9 579.500L425.3 592Q425.9 595.500 428.7 595.500H494.3Q497.1 595.500 497.7 592L500.1 579.500" fill="none" stroke="#000" stroke-width="1.100"/>
<path d="M498.9 579.500L501.3 592Q501.9 595.500 504.7 595.500H588.3Q591.1 595.500 591.7 592L594.1 579.500" fill="none" stroke="#000" stroke-width="1.100"/>
<g shape-rendering="crispEdges"><rect x="649.500" y="608.500" width="8" height="7" fill="none" stroke="#000" stroke-dasharray="1 1"/><path d="M646 606.500h5M648.500 604v5" stroke="#000" fill="none"/></g>
<g shape-rendering="crispEdges"><rect x="746.500" y="607.500" width="8" height="8" fill="none" stroke="#000" stroke-dasharray="1 1"/></g><path d="M745 605.500h8M750.500 603l3 2.500l-3 2.500zM743.500 607v8M741 612.500l2.500 3l2.500-3z" stroke="#000" stroke-width="1" fill="#000"/>
<path d="M881 620l11-11M885 620l7-7M889 620l3-3" stroke="#808080" stroke-width="1.400"/><path d="M880 620l12-12M884 620l8-8M888 620l4-4" stroke="#fff" stroke-width="1"/>
</svg>
</div>
<div class="a" id="cap" style="left:329px;top:629.9px;font-size:16px;font-weight:bold;line-height:20px;white-space:pre;will-change:transform;">Рис. 10</div>
<div class="a" id="cap2" style="left:396.9px;top:629.9px;font-size:16px;font-weight:bold;line-height:20px;white-space:pre;letter-spacing:0.13px;will-change:transform;">Поворот объекта в проекте</div>
</body></html>
